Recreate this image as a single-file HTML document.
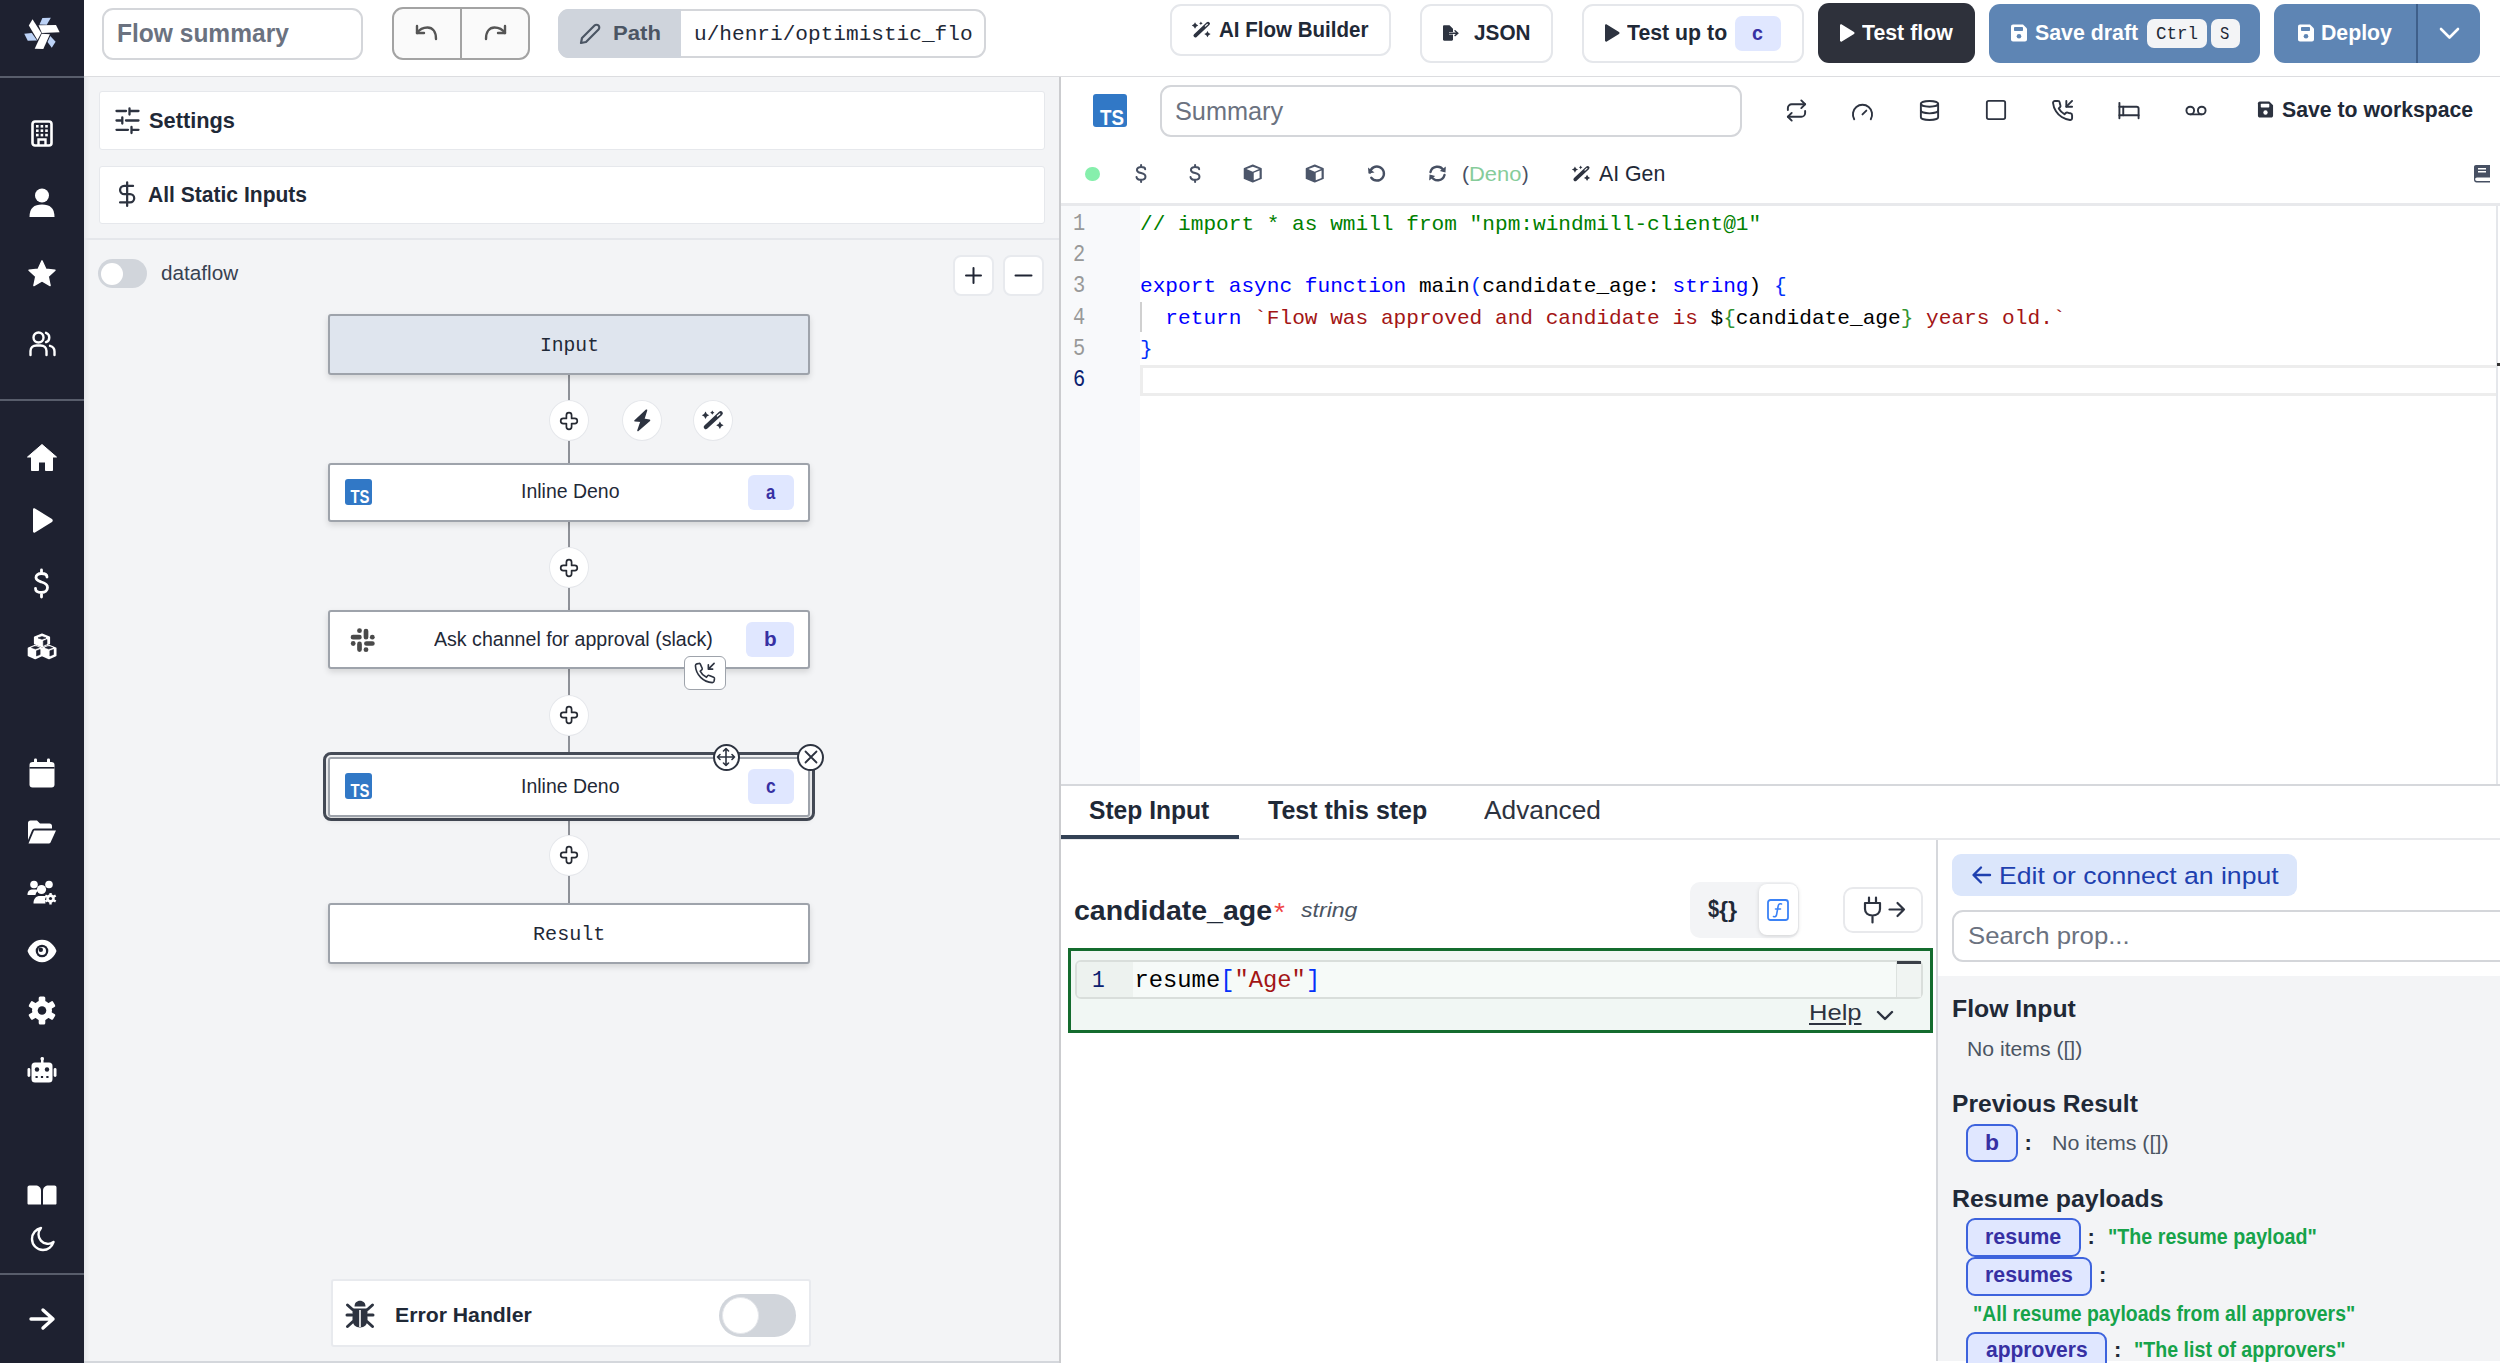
<!DOCTYPE html><html><head><meta charset="utf-8"><title>Flow editor</title><style>*{box-sizing:border-box;margin:0;padding:0}
html,body{width:2500px;height:1363px;overflow:hidden;background:#fff}
body{position:relative;font-family:"Liberation Sans",sans-serif}
.a{position:absolute}
.t{position:absolute;white-space:pre;line-height:1;transform-origin:0 0}
svg.a{overflow:visible}</style></head><body>
<div class="a" style="left:0px;top:0px;width:84px;height:1363px;background:#1e2130"></div>
<div class="a" style="left:0px;top:76px;width:84px;height:2px;background:#585d6b"></div>
<div class="a" style="left:0px;top:399px;width:84px;height:2px;background:#585d6b"></div>
<div class="a" style="left:0px;top:1273px;width:84px;height:2px;background:#585d6b"></div>
<svg class="a" style="left:16px;top:8px" width="52" height="50" viewBox="0 0 1418 1363" preserveAspectRatio="none">
<polygon points="640,450 720,270 950,265 840,455" fill="#bcd2f6"/>
<polygon points="615,472 1090,465 1190,660 705,680" fill="#fff"/>
<polygon points="700,705 925,715 745,1120 510,1110" fill="#fff"/>
<polygon points="935,760 1080,920 975,1085 860,930" fill="#bcd2f6"/>
<polygon points="350,480 450,310 690,680 585,870" fill="#fff"/>
<polygon points="225,700 430,680 575,885 320,890" fill="#bcd2f6"/>
</svg>
<svg class="a" style="left:31px;top:120px" width="22" height="27" viewBox="0 0 22 27" preserveAspectRatio="none"><rect x="1.5" y="1.5" width="19" height="24" rx="2.5" fill="none" stroke="#fff" stroke-width="2.6"/><rect x="5.0" y="5.0" width="2.6" height="2.6" fill="#fff"/><rect x="5.0" y="9.4" width="2.6" height="2.6" fill="#fff"/><rect x="5.0" y="13.8" width="2.6" height="2.6" fill="#fff"/><rect x="9.6" y="5.0" width="2.6" height="2.6" fill="#fff"/><rect x="9.6" y="9.4" width="2.6" height="2.6" fill="#fff"/><rect x="9.6" y="13.8" width="2.6" height="2.6" fill="#fff"/><rect x="14.2" y="5.0" width="2.6" height="2.6" fill="#fff"/><rect x="14.2" y="9.4" width="2.6" height="2.6" fill="#fff"/><rect x="14.2" y="13.8" width="2.6" height="2.6" fill="#fff"/><path d="M7.5,25 V19.5 H14.5 V25" fill="none" stroke="#fff" stroke-width="2.4"/></svg>
<svg class="a" style="left:29px;top:188px" width="26" height="30" viewBox="0 0 26 30" preserveAspectRatio="none"><circle cx="13" cy="7.5" r="7" fill="#fff"/><path d="M0.5,29 C0.5,20 5,16.5 13,16.5 C21,16.5 25.5,20 25.5,29 Z" fill="#fff"/></svg>
<svg class="a" style="left:28px;top:260px" width="28" height="27" viewBox="0 0 28 27" preserveAspectRatio="none"><path d="M14,0.8 L17.9,9.2 L27,10.2 L20.2,16.4 L22.1,25.6 L14,20.9 L5.9,25.6 L7.8,16.4 L1,10.2 L10.1,9.2 Z" fill="#fff" stroke="#fff" stroke-width="1.4" stroke-linejoin="round"/></svg>
<svg class="a" style="left:29px;top:331px" width="27" height="25" viewBox="0 0 27 25" preserveAspectRatio="none"><circle cx="9.5" cy="6.5" r="5" fill="none" stroke="#fff" stroke-width="2.4"/><path d="M1.5,24 V20 C1.5,16.5 4,14.5 7.5,14.5 H11.5 C15,14.5 17.5,16.5 17.5,20 V24" fill="none" stroke="#fff" stroke-width="2.4" stroke-linecap="round"/><path d="M17,1.8 A5,5 0 0 1 17,11.2" fill="none" stroke="#fff" stroke-width="2.4" stroke-linecap="round"/><path d="M21,14.8 C23.8,15.5 25.5,17.5 25.5,20.5 V24" fill="none" stroke="#fff" stroke-width="2.4" stroke-linecap="round"/></svg>
<svg class="a" style="left:27px;top:444px" width="30" height="27" viewBox="0 0 30 27" preserveAspectRatio="none"><path d="M15,0.5 L29.5,13 L25.5,13 V26.5 H18.5 V18 H11.5 V26.5 H4.5 V13 L0.5,13 Z" fill="#fff" stroke="#fff" stroke-width="1" stroke-linejoin="round"/></svg>
<svg class="a" style="left:31px;top:508px" width="22" height="25" viewBox="0 0 22 25" preserveAspectRatio="none"><path d="M2,1.5 C2,0.5 3,0 4,0.6 L21,11 C22,11.7 22,13.3 21,14 L4,24.4 C3,25 2,24.5 2,23.5 Z" fill="#fff"/></svg>
<svg class="a" style="left:33px;top:569px" width="17" height="29" viewBox="0 0 17 29" preserveAspectRatio="none"><path d="M14,8 C14,5.5 11.5,4.5 8.5,4.5 C5,4.5 3,6 3,8.5 C3,11.5 6,12.2 8.5,13 C11.5,13.8 14.5,15 14.5,18.5 C14.5,21.5 12,23.5 8.5,23.5 C5,23.5 2.5,22 2.5,19.5 M8.5,1 V4.5 M8.5,23.5 V28" fill="none" stroke="#fff" stroke-width="2.8" stroke-linecap="round"/></svg>
<svg class="a" style="left:24px;top:628px;" width="36" height="36" viewBox="24 628 36 36"><g fill="#fff" stroke="#fff" stroke-width="1.6" stroke-linejoin="round"><polygon points="42,634.3 49.3,637.3 49.3,643.5 42,646.5 34.7,643.5 34.7,637.3"/><polygon points="35.2,645.5 41.7,648.3 41.7,655.5 35.2,658.5 28.5,655.5 28.5,648.3"/><polygon points="49,645.5 55.7,648.3 55.7,655.5 49,658.5 42.3,655.5 42.3,648.3"/></g><g fill="#1e2130" stroke="#1e2130" stroke-width="0.6" stroke-linejoin="round"><polygon points="42,636.5 46,637.9 42,639.3 38,637.9"/><polygon points="43.3,641 47,639.5 47,644 43.3,645.5"/><polygon points="35.4,646.2 39.3,647.6 35.4,649 31.5,647.6"/><polygon points="36.5,650.8 40.1,649.5 40.1,654.5 36.5,656"/><polygon points="48.8,646.2 52.7,647.6 48.8,649 44.9,647.6"/><polygon points="49.9,650.8 53.5,649.5 53.5,654.5 49.9,656"/></g></svg>
<svg class="a" style="left:29px;top:758px" width="26" height="30" viewBox="0 0 26 30" preserveAspectRatio="none"><rect x="0.5" y="4" width="25" height="25.5" rx="3" fill="#fff"/><rect x="5" y="0.5" width="3" height="6" rx="1.2" fill="#fff"/><rect x="18" y="0.5" width="3" height="6" rx="1.2" fill="#fff"/><rect x="0.5" y="9" width="25" height="1.6" fill="#1e2130"/></svg>
<svg class="a" style="left:27px;top:820px" width="30" height="24" viewBox="0 0 30 24" preserveAspectRatio="none"><path d="M1,3 C1,1.5 2,0.5 3.5,0.5 H10 L13,3.5 H22.5 C24,3.5 25,4.5 25,6 V8.5 H8 C6.5,8.5 5.5,9.3 5,10.5 L1,20 Z" fill="#fff"/><path d="M7,10.5 H29 L23.5,22.5 C23,23.3 22.3,23.5 21.5,23.5 H1.5 Z" fill="#fff"/></svg>
<svg class="a" style="left:27px;top:880px" width="30" height="24" viewBox="0 0 30 24" preserveAspectRatio="none"><circle cx="7" cy="4.5" r="3.8" fill="#fff"/><circle cx="22" cy="4.5" r="3.8" fill="#fff"/><path d="M0.5,15 C0.5,11 2.5,9.5 6,9.5 H9 C10,9.5 10.8,9.8 11.5,10.2 C9.5,11.8 8.5,13.5 8.5,15 Z" fill="#fff"/><circle cx="14.5" cy="9.5" r="4.6" fill="#fff"/><path d="M6.5,23.5 C6.5,18.5 9,16 13,16 H17 C18,16 19,16.3 19.5,16.5 C18,17.8 17.5,20.5 18.5,23.5 Z" fill="#fff"/><g transform="translate(23.5,18.5)"><circle r="4.2" fill="#fff"/><g fill="#fff"><rect x="-1.2" y="-6" width="2.4" height="3" transform="rotate(0)"/><rect x="-1.2" y="-6" width="2.4" height="3" transform="rotate(60)"/><rect x="-1.2" y="-6" width="2.4" height="3" transform="rotate(120)"/><rect x="-1.2" y="-6" width="2.4" height="3" transform="rotate(180)"/><rect x="-1.2" y="-6" width="2.4" height="3" transform="rotate(240)"/><rect x="-1.2" y="-6" width="2.4" height="3" transform="rotate(300)"/></g><circle r="1.6" fill="#1e2130"/></g><path d="M19.5,13.5 C21,12.5 23,12 25,12.3" fill="none" stroke="#1e2130" stroke-width="1.4"/></svg>
<svg class="a" style="left:27px;top:939px" width="30" height="24" viewBox="0 0 30 24" preserveAspectRatio="none"><path d="M15,0.8 C23,0.8 28,7.5 29.5,12 C28,16.5 23,23.2 15,23.2 C7,23.2 2,16.5 0.5,12 C2,7.5 7,0.8 15,0.8 Z" fill="#fff"/><circle cx="15" cy="12" r="6.3" fill="#1e2130"/><circle cx="15" cy="12" r="4" fill="#fff"/><circle cx="13.8" cy="10.8" r="2.2" fill="#1e2130"/></svg>
<svg class="a" style="left:28px;top:996px" width="28" height="29" viewBox="0 0 28 29" preserveAspectRatio="none"><g transform="translate(14,14.5)"><circle r="10" fill="#fff"/><rect x="-3.3" y="-14" width="6.6" height="7" rx="1.5" fill="#fff" transform="rotate(0)"/><rect x="-3.3" y="-14" width="6.6" height="7" rx="1.5" fill="#fff" transform="rotate(60)"/><rect x="-3.3" y="-14" width="6.6" height="7" rx="1.5" fill="#fff" transform="rotate(120)"/><rect x="-3.3" y="-14" width="6.6" height="7" rx="1.5" fill="#fff" transform="rotate(180)"/><rect x="-3.3" y="-14" width="6.6" height="7" rx="1.5" fill="#fff" transform="rotate(240)"/><rect x="-3.3" y="-14" width="6.6" height="7" rx="1.5" fill="#fff" transform="rotate(300)"/><circle r="4.3" fill="#1e2130"/></g></svg>
<svg class="a" style="left:27px;top:1057px" width="30" height="26" viewBox="0 0 30 26" preserveAspectRatio="none"><rect x="14" y="0.5" width="2.5" height="6" fill="#fff"/><circle cx="15.2" cy="1.8" r="1.8" fill="#fff"/><rect x="4.5" y="5.5" width="21" height="20" rx="3.5" fill="#fff"/><rect x="0.5" y="11" width="2.8" height="9" rx="1.4" fill="#fff"/><rect x="26.7" y="11" width="2.8" height="9" rx="1.4" fill="#fff"/><circle cx="10" cy="12.5" r="2.2" fill="#1e2130"/><circle cx="20" cy="12.5" r="2.2" fill="#1e2130"/><rect x="8.5" y="19" width="2.2" height="2" fill="#1e2130"/><rect x="13.9" y="19" width="2.2" height="2" fill="#1e2130"/><rect x="19.3" y="19" width="2.2" height="2" fill="#1e2130"/></svg>
<svg class="a" style="left:27px;top:1185px" width="30" height="20" viewBox="0 0 30 20" preserveAspectRatio="none"><path d="M0.5,2.5 C0.5,1.3 1.3,0.5 2.5,0.5 H8.5 C11.5,0.5 14,2.5 14,5.5 V19.5 H1.5 C1,19.5 0.5,19 0.5,18.5 Z" fill="#fff"/><path d="M29.5,2.5 C29.5,1.3 28.7,0.5 27.5,0.5 H21.5 C18.5,0.5 16,2.5 16,5.5 V19.5 H28.5 C29,19.5 29.5,19 29.5,18.5 Z" fill="#fff"/></svg>
<svg class="a" style="left:30px;top:1226px" width="25" height="25" viewBox="0 0 25 25" preserveAspectRatio="none"><path d="M11,2 C6,3 2,7.5 2,13 C2,19 7,24 13,24 C18,24 22,20.5 23.5,16 C21.5,17.5 19,18 17,17.8 C12,17.3 8.5,13 8.5,8.5 C8.5,6 9.5,3.8 11,2 Z" fill="none" stroke="#fff" stroke-width="2.4" stroke-linejoin="round"/></svg>
<svg class="a" style="left:29px;top:1308px" width="27" height="22" viewBox="0 0 27 22" preserveAspectRatio="none"><path d="M2,11 H24 M14,2 L24,11 L14,20" fill="none" stroke="#fff" stroke-width="3.4" stroke-linecap="round" stroke-linejoin="round"/></svg>
<div class="a" style="left:84px;top:0px;width:2416px;height:76px;background:#fff"></div>
<div class="a" style="left:84px;top:76px;width:2416px;height:1.5px;background:#dcdde0"></div>
<div class="a" style="left:102px;top:8px;width:261px;height:52px;border:2px solid #d4d6da;border-radius:11px;background:#fff"></div>
<div class="a" style="left:392px;top:7px;width:138px;height:53px;border:2px solid #a3a3a3;border-radius:11px;background:#fafafa"></div>
<div class="a" style="left:460px;top:8px;width:2px;height:51px;background:#a3a3a3"></div>
<svg class="a" style="left:414px;top:24px;" width="24" height="18" viewBox="0 0 24 18"><path d="M3,2 V9 H10" fill="none" stroke="#555" stroke-width="2.4" stroke-linecap="round" stroke-linejoin="round"/><path d="M3,9 C6,4.5 10,3.5 13.5,3.5 C18.5,3.5 22,7.5 22,15" fill="none" stroke="#555" stroke-width="2.4" stroke-linecap="round"/></svg>
<svg class="a" style="left:484px;top:24px;" width="24" height="18" viewBox="0 0 24 18"><path d="M21,2 V9 H14" fill="none" stroke="#555" stroke-width="2.4" stroke-linecap="round" stroke-linejoin="round"/><path d="M21,9 C18,4.5 14,3.5 10.5,3.5 C5.5,3.5 2,7.5 2,15" fill="none" stroke="#555" stroke-width="2.4" stroke-linecap="round"/></svg>
<div class="a" style="left:558px;top:9px;width:428px;height:49px;border:2px solid #d4d6da;border-radius:11px;background:#fff"></div>
<div class="a" style="left:558px;top:9px;width:123px;height:49px;background:#cfd4dc;border-radius:11px 0 0 11px"></div>
<svg class="a" style="left:579px;top:23px;" width="22" height="22" viewBox="0 0 22 22"><path d="M15.5,2.5 C16.5,1.5 18.5,1.5 19.5,2.5 C20.5,3.5 20.5,5.5 19.5,6.5 L7,19 L2,20 L3,15 Z" fill="none" stroke="#4b5563" stroke-width="2.2" stroke-linejoin="round"/></svg>
<div class="a" style="left:1170px;top:4px;width:221px;height:52px;border:2px solid #e5e7eb;border-radius:11px;background:#fff"></div>
<svg class="a" style="left:1192px;top:21px;" width="19" height="17" viewBox="0 -0.5 22 19"><path d="M3.9,16 L18.6,2.3" stroke="#2d3340" stroke-width="4.4" stroke-linecap="round" fill="none"/><path d="M17.8,2.9 L15.4,5.1" stroke="#fff" stroke-width="1.3" stroke-linecap="round"/><path d="M3.5,0.5999999999999996 Q4.314,3.4859999999999998 7.2,4.3 Q4.314,5.114 3.5,8.0 Q2.686,5.114 -0.20000000000000018,4.3 Q2.686,3.4859999999999998 3.5,0.5999999999999996 Z" fill="#2d3340"/><path d="M10.3,-0.40000000000000013 Q10.762,1.238 12.4,1.7 Q10.762,2.162 10.3,3.8 Q9.838000000000001,2.162 8.200000000000001,1.7 Q9.838000000000001,1.238 10.3,-0.40000000000000013 Z" fill="#2d3340"/><path d="M17.9,10.600000000000001 Q18.714,13.486 21.599999999999998,14.3 Q18.714,15.114 17.9,18.0 Q17.086,15.114 14.2,14.3 Q17.086,13.486 17.9,10.600000000000001 Z" fill="#2d3340"/></svg>
<div class="a" style="left:1420px;top:4px;width:133px;height:59px;border:2px solid #e5e7eb;border-radius:11px;background:#fff"></div>
<svg class="a" style="left:1442px;top:25px;" width="17" height="16" viewBox="0 0 17 16"><path d="M1,1.5 C1,0.8 1.5,0.3 2.2,0.3 H7.5 L11,3.8 V7 H7 V9.5 H11 V14.5 C11,15.2 10.5,15.7 9.8,15.7 H2.2 C1.5,15.7 1,15.2 1,14.5 Z" fill="#2d3340"/><path d="M7.5,8.2 H15.5 M13,5.8 L15.8,8.2 L13,10.6" fill="none" stroke="#2d3340" stroke-width="1.4" stroke-linecap="round"/></svg>
<div class="a" style="left:1582px;top:4px;width:222px;height:59px;border:2px solid #e5e7eb;border-radius:11px;background:#fff"></div>
<svg class="a" style="left:1604px;top:24px;" width="16" height="18" viewBox="0 0 16 18"><path d="M1,1.5 C1,0.6 2,0 2.8,0.5 L15,8 C15.7,8.5 15.7,9.5 15,10 L2.8,17.5 C2,18 1,17.4 1,16.5 Z" fill="#2d3340"/></svg>
<div class="a" style="left:1735px;top:16px;width:46px;height:35px;background:#e0e7ff;border-radius:7px"></div>
<div class="a" style="left:1818px;top:3px;width:157px;height:60px;background:#2e313b;border-radius:11px"></div>
<svg class="a" style="left:1839px;top:24px;" width="16" height="18" viewBox="0 0 16 18"><path d="M1,1.5 C1,0.6 2,0 2.8,0.5 L15,8 C15.7,8.5 15.7,9.5 15,10 L2.8,17.5 C2,18 1,17.4 1,16.5 Z" fill="#fff"/></svg>
<div class="a" style="left:1989px;top:4px;width:271px;height:59px;background:#5e85b4;border-radius:11px"></div>
<svg class="a" style="left:2010px;top:24px;" width="18" height="18" viewBox="0 0 18 18"><path d="M1,2.5 C1,1.4 1.9,0.5 3,0.5 H13 L17,4.5 V15.5 C17,16.6 16.1,17.5 15,17.5 H3 C1.9,17.5 1,16.6 1,15.5 Z" fill="#fff"/><rect x="4" y="3" width="9" height="4" rx="0.8" fill="#5e85b4"/><circle cx="9" cy="12.2" r="2.3" fill="#5e85b4"/></svg>
<div class="a" style="left:2147px;top:19px;width:60px;height:29px;background:#f3f4f6;border-radius:7px"></div>
<div class="a" style="left:2211px;top:19px;width:29px;height:29px;background:#f3f4f6;border-radius:7px"></div>
<div class="a" style="left:2274px;top:4px;width:206px;height:59px;background:#5e85b4;border-radius:11px"></div>
<div class="a" style="left:2416px;top:4px;width:2px;height:59px;background:#3f5f8a"></div>
<svg class="a" style="left:2297px;top:24px;" width="18" height="18" viewBox="0 0 18 18"><path d="M1,2.5 C1,1.4 1.9,0.5 3,0.5 H13 L17,4.5 V15.5 C17,16.6 16.1,17.5 15,17.5 H3 C1.9,17.5 1,16.6 1,15.5 Z" fill="#fff"/><rect x="4" y="3" width="9" height="4" rx="0.8" fill="#5e85b4"/><circle cx="9" cy="12.2" r="2.3" fill="#5e85b4"/></svg>
<svg class="a" style="left:2439px;top:27px;" width="21" height="13" viewBox="0 0 21 13"><path d="M2,2 L10.5,10.5 L19,2" fill="none" stroke="#fff" stroke-width="2.6" stroke-linecap="round" stroke-linejoin="round"/></svg>
<div class="a" style="left:84px;top:77px;width:975px;height:1286px;background:#f3f4f6"></div>
<div class="a" style="left:84px;top:77px;width:6px;height:1286px;background:linear-gradient(90deg,#e6e8eb,#f3f4f6)"></div>
<div class="a" style="left:1059px;top:77px;width:2px;height:1286px;background:#cbcccf"></div>
<div class="a" style="left:98.5px;top:91px;width:946.5px;height:59px;background:#fff;border:1.5px solid #e6e8ec;border-radius:3px"></div>
<svg class="a" style="left:108px;top:100px;" width="40" height="40" viewBox="0 0 40 40"><g stroke="#2d3340" stroke-width="2.3" stroke-linecap="round" fill="none"><path d="M8.5,11 H18 M21.5,11 H30.5 M21.5,8.5 V14.5 M8.5,20.5 H14.3 M18,20.5 H30.5 M14.3,17.3 V23.6 M8.5,29.8 H20 M23.5,29.8 H30.5 M23.5,27 V33"/></g></svg>
<div class="a" style="left:98.5px;top:165.5px;width:946.5px;height:58.5px;background:#fff;border:1.5px solid #e6e8ec;border-radius:3px"></div>
<svg class="a" style="left:113.2px;top:180.3px;" width="28.3" height="28.3" viewBox="0 0 24 24"><path d="M12 2v20 M17 5H9.5a3.5 3.5 0 0 0 0 7h5a3.5 3.5 0 0 1 0 7H6" fill="none" stroke="#2d3340" stroke-width="1.9" stroke-linecap="round" stroke-linejoin="round"/></svg>
<div class="a" style="left:84px;top:238px;width:975px;height:2px;background:#e5e7eb"></div>
<div class="a" style="left:98px;top:259px;width:49px;height:29px;background:#d1d5db;border-radius:15px"></div>
<div class="a" style="left:101px;top:263px;width:22px;height:22px;background:#fff;border-radius:50%"></div>
<div class="a" style="left:953px;top:255px;width:41px;height:41px;background:#fff;border:2px solid #e8eaee;border-radius:8px"></div>
<div class="a" style="left:1003px;top:255px;width:41px;height:41px;background:#fff;border:2px solid #e8eaee;border-radius:8px"></div>
<svg class="a" style="left:965px;top:267px;" width="17" height="17" viewBox="0 0 17 17"><path d="M8.5,1 V16 M1,8.5 H16" stroke="#1f2433" stroke-width="2" stroke-linecap="round"/></svg>
<svg class="a" style="left:1014px;top:267px;" width="19" height="17" viewBox="0 0 19 17"><path d="M1.5,8.5 H17.5" stroke="#1f2433" stroke-width="2" stroke-linecap="round"/></svg>
<div class="a" style="left:568px;top:375px;width:2px;height:26px;background:#8e9198"></div>
<div class="a" style="left:568px;top:440px;width:2px;height:24px;background:#8e9198"></div>
<div class="a" style="left:568px;top:521px;width:2px;height:27px;background:#8e9198"></div>
<div class="a" style="left:568px;top:587px;width:2px;height:24px;background:#8e9198"></div>
<div class="a" style="left:568px;top:668px;width:2px;height:27px;background:#8e9198"></div>
<div class="a" style="left:568px;top:735px;width:2px;height:17px;background:#8e9198"></div>
<div class="a" style="left:568px;top:820px;width:2px;height:15px;background:#8e9198"></div>
<div class="a" style="left:568px;top:874px;width:2px;height:31px;background:#8e9198"></div>
<div class="a" style="left:328px;top:314px;width:482px;height:61px;background:#dfe5ee;border:2px solid #9ea3ab;border-radius:3px;box-shadow:0 3px 6px rgba(0,0,0,0.13)"></div>
<div class="a" style="left:549px;top:400.0px;width:40px;height:41px;background:#fff;border:1.5px solid #e5e7eb;border-radius:50%"></div>
<svg class="a" style="left:559.0px;top:410.5px;" width="20" height="20" viewBox="0 0 20 20"><path d="M7.4,4.3 A2.6,2.6 0 0 1 12.6,4.3 V7.4 H15.7 A2.6,2.6 0 0 1 15.7,12.6 H12.6 V15.7 A2.6,2.6 0 0 1 7.4,15.7 V12.6 H4.3 A2.6,2.6 0 0 1 4.3,7.4 H7.4 Z" fill="none" stroke="#262a33" stroke-width="1.7" stroke-linejoin="round"/></svg>
<div class="a" style="left:622px;top:400.0px;width:40px;height:41px;background:#fff;border:1.5px solid #e5e7eb;border-radius:50%"></div>
<svg class="a" style="left:633.75px;top:409.15px;" width="16.5" height="22.7" viewBox="0 0 16.5 22.7"><path d="M12.5,1.2 L1,11.8 L7.2,12.3 L4,21.5 L15.5,11.3 L9.6,10.4 Z" fill="#2d3340" stroke="#2d3340" stroke-width="1.6" stroke-linejoin="round"/></svg>
<div class="a" style="left:693.4px;top:400.0px;width:40px;height:41px;background:#fff;border:1.5px solid #e5e7eb;border-radius:50%"></div>
<svg class="a" style="left:702.4px;top:411.0px;" width="22" height="19" viewBox="0 0 22 19"><path d="M3.9,16 L18.6,2.3" stroke="#2d3340" stroke-width="4.4" stroke-linecap="round" fill="none"/><path d="M17.8,2.9 L15.4,5.1" stroke="#fff" stroke-width="1.3" stroke-linecap="round"/><path d="M3.5,0.5999999999999996 Q4.314,3.4859999999999998 7.2,4.3 Q4.314,5.114 3.5,8.0 Q2.686,5.114 -0.20000000000000018,4.3 Q2.686,3.4859999999999998 3.5,0.5999999999999996 Z" fill="#2d3340"/><path d="M10.3,-0.40000000000000013 Q10.762,1.238 12.4,1.7 Q10.762,2.162 10.3,3.8 Q9.838000000000001,2.162 8.200000000000001,1.7 Q9.838000000000001,1.238 10.3,-0.40000000000000013 Z" fill="#2d3340"/><path d="M17.9,10.600000000000001 Q18.714,13.486 21.599999999999998,14.3 Q18.714,15.114 17.9,18.0 Q17.086,15.114 14.2,14.3 Q17.086,13.486 17.9,10.600000000000001 Z" fill="#2d3340"/></svg>
<div class="a" style="left:328px;top:463px;width:482px;height:59px;background:#fff;border:2px solid #9ea3ab;border-radius:3px;box-shadow:0 3px 6px rgba(0,0,0,0.13)"></div>
<svg class="a" style="left:345px;top:479px;" width="27" height="26" viewBox="0 0 27 26"><rect x="0" y="0" width="27" height="26" rx="3" fill="#3178c6"/><text x="5.5" y="24" font-family="Liberation Sans" font-weight="700" font-size="18" textLength="19" lengthAdjust="spacingAndGlyphs" fill="#fff">TS</text></svg>
<div class="a" style="left:748px;top:475px;width:46px;height:35px;background:#e0e7ff;border-radius:6px"></div>
<div class="a" style="left:549px;top:547.0px;width:40px;height:41px;background:#fff;border:1.5px solid #e5e7eb;border-radius:50%"></div>
<svg class="a" style="left:559.0px;top:557.5px;" width="20" height="20" viewBox="0 0 20 20"><path d="M7.4,4.3 A2.6,2.6 0 0 1 12.6,4.3 V7.4 H15.7 A2.6,2.6 0 0 1 15.7,12.6 H12.6 V15.7 A2.6,2.6 0 0 1 7.4,15.7 V12.6 H4.3 A2.6,2.6 0 0 1 4.3,7.4 H7.4 Z" fill="none" stroke="#262a33" stroke-width="1.7" stroke-linejoin="round"/></svg>
<div class="a" style="left:328px;top:610px;width:482px;height:59px;background:#fff;border:2px solid #9ea3ab;border-radius:3px;box-shadow:0 3px 6px rgba(0,0,0,0.13)"></div>
<svg class="a" style="left:346px;top:624px;" width="32" height="32" viewBox="346 624 32 32"><g stroke="#4a4a4a" stroke-width="4.7" stroke-linecap="round" fill="none"><path d="M366,631 V637.2 M353,637.2 H359.4 M366.4,643.5 H372.4 M359.5,643.9 V649.6"/></g><g fill="#4a4a4a"><circle cx="359.5" cy="630.7" r="2.4"/><circle cx="372.3" cy="637.2" r="2.4"/><circle cx="353.2" cy="643.5" r="2.4"/><circle cx="366" cy="649.7" r="2.4"/></g></svg>
<div class="a" style="left:746px;top:622px;width:48px;height:35px;background:#e0e7ff;border-radius:6px"></div>
<div class="a" style="left:684px;top:656px;width:42px;height:34px;background:#fff;border:1.5px solid #9ea3ab;border-radius:6px"></div>
<svg class="a" style="left:694px;top:661px;" width="22" height="24" viewBox="0 0 23 24"><path d="M6.5,2.5 L8.5,7 C8.8,7.6 8.6,8.3 8.1,8.7 L6.5,10 C7.8,12.8 10.2,15.2 13,16.5 L14.3,14.9 C14.7,14.4 15.4,14.2 16,14.5 L20.5,16.5 C21.2,16.8 21.5,17.5 21.4,18.2 L21,20.5 C20.8,21.4 20,22 19.1,22 C9.7,21.5 2,13.8 1.5,4.4 C1.5,3.5 2.1,2.7 3,2.5 L5.2,2 C5.8,1.9 6.2,2.1 6.5,2.5 Z" fill="none" stroke="#2d3340" stroke-width="1.7" stroke-linejoin="round"/><path d="M21,2 L15,8 M15,3.5 V8 H19.5" fill="none" stroke="#2d3340" stroke-width="1.7" stroke-linecap="round" stroke-linejoin="round"/></svg>
<div class="a" style="left:549px;top:694.5px;width:40px;height:41px;background:#fff;border:1.5px solid #e5e7eb;border-radius:50%"></div>
<svg class="a" style="left:559.0px;top:705.0px;" width="20" height="20" viewBox="0 0 20 20"><path d="M7.4,4.3 A2.6,2.6 0 0 1 12.6,4.3 V7.4 H15.7 A2.6,2.6 0 0 1 15.7,12.6 H12.6 V15.7 A2.6,2.6 0 0 1 7.4,15.7 V12.6 H4.3 A2.6,2.6 0 0 1 4.3,7.4 H7.4 Z" fill="none" stroke="#262a33" stroke-width="1.7" stroke-linejoin="round"/></svg>
<div class="a" style="left:323px;top:752px;width:492px;height:69px;border:3.5px solid #454b57;border-radius:8px"></div>
<div class="a" style="left:328px;top:756.5px;width:482px;height:60px;background:#fff;border:2px solid #9ea3ab;border-radius:3px;box-shadow:0 3px 6px rgba(0,0,0,0.13)"></div>
<svg class="a" style="left:345px;top:773px;" width="27" height="26" viewBox="0 0 27 26"><rect x="0" y="0" width="27" height="26" rx="3" fill="#3178c6"/><text x="5.5" y="24" font-family="Liberation Sans" font-weight="700" font-size="18" textLength="19" lengthAdjust="spacingAndGlyphs" fill="#fff">TS</text></svg>
<div class="a" style="left:748px;top:769px;width:46px;height:35px;background:#e0e7ff;border-radius:6px"></div>
<div class="a" style="left:712.5px;top:743.5px;width:27px;height:27px;background:#fff;border:2.5px solid #2d3340;border-radius:50%"></div>
<svg class="a" style="left:716px;top:747px;" width="20" height="20" viewBox="0 0 20 20"><path d="M10,1.5 V18.5 M1.5,10 H18.5 M7.5,4 L10,1.5 L12.5,4 M7.5,16 L10,18.5 L12.5,16 M4,7.5 L1.5,10 L4,12.5 M16,7.5 L18.5,10 L16,12.5" fill="none" stroke="#2d3340" stroke-width="1.6" stroke-linecap="round" stroke-linejoin="round"/></svg>
<div class="a" style="left:797px;top:743.5px;width:27px;height:27px;background:#fff;border:2.5px solid #2d3340;border-radius:50%"></div>
<svg class="a" style="left:803.5px;top:750px;" width="14" height="14" viewBox="0 0 14 14"><path d="M1.5,1.5 L12.5,12.5 M12.5,1.5 L1.5,12.5" stroke="#2d3340" stroke-width="1.8" stroke-linecap="round"/></svg>
<div class="a" style="left:549px;top:834.5px;width:40px;height:41px;background:#fff;border:1.5px solid #e5e7eb;border-radius:50%"></div>
<svg class="a" style="left:559.0px;top:845.0px;" width="20" height="20" viewBox="0 0 20 20"><path d="M7.4,4.3 A2.6,2.6 0 0 1 12.6,4.3 V7.4 H15.7 A2.6,2.6 0 0 1 15.7,12.6 H12.6 V15.7 A2.6,2.6 0 0 1 7.4,15.7 V12.6 H4.3 A2.6,2.6 0 0 1 4.3,7.4 H7.4 Z" fill="none" stroke="#262a33" stroke-width="1.7" stroke-linejoin="round"/></svg>
<div class="a" style="left:328px;top:903px;width:482px;height:61px;background:#fff;border:2px solid #9ea3ab;border-radius:3px;box-shadow:0 3px 6px rgba(0,0,0,0.13)"></div>
<div class="a" style="left:331px;top:1279px;width:480px;height:68px;background:#fff;border:2px solid #e8eaee;border-radius:3px"></div>
<svg class="a" style="left:345px;top:1300px;" width="30" height="29" viewBox="0 0 30 29"><g fill="#2d3340"><path d="M9.5,6.5 C9.5,3 11.8,0.8 15,0.8 C18.2,0.8 20.5,3 20.5,6.5 Z"/><path d="M7.5,8.5 H22.5 V20 C22.5,24.5 19.5,27.5 15,27.5 C10.5,27.5 7.5,24.5 7.5,20 Z"/></g><path d="M15,10 V27" stroke="#fff" stroke-width="1.6"/><g stroke="#2d3340" stroke-width="3" stroke-linecap="round"><path d="M2,15 H7 M23,15 H28 M2.5,5 L7.5,9.5 M27.5,5 L22.5,9.5 M2.5,26.5 L8,21.5 M27.5,26.5 L22,21.5"/></g></svg>
<div class="a" style="left:719px;top:1294px;width:77px;height:43px;background:#d1d5db;border-radius:22px"></div>
<div class="a" style="left:722px;top:1297px;width:37px;height:37px;background:#fff;border-radius:50%;border:1px solid #e5e7eb"></div>
<div class="a" style="left:84px;top:1361px;width:975px;height:2px;background:#d4d7dc"></div>
<div class="a" style="left:1061px;top:77px;width:1439px;height:1286px;background:#fff"></div>
<svg class="a" style="left:1093px;top:94px;" width="34" height="33" viewBox="0 0 34 33"><rect x="0" y="0" width="34" height="33" rx="3" fill="#3178c6"/><text x="7" y="31" font-family="Liberation Sans" font-weight="700" font-size="22.5" textLength="24" lengthAdjust="spacingAndGlyphs" fill="#fff">TS</text></svg>
<div class="a" style="left:1160px;top:85px;width:582px;height:52px;border:2px solid #d4d6da;border-radius:11px;background:#fff"></div>
<svg class="a" style="left:1785px;top:99px;" width="23" height="23" viewBox="0 0 24 24"><g fill="none" stroke="#2d3340" stroke-width="2" stroke-linecap="round" stroke-linejoin="round"><path d="M17 1.5l4 4-4 4"/><path d="M3 11.5v-2a4 4 0 0 1 4-4h14"/><path d="M7 22.5l-4-4 4-4"/><path d="M21 12.5v2a4 4 0 0 1-4 4H3"/></g></svg>
<svg class="a" style="left:1851px;top:101px;" width="23" height="23" viewBox="0 0 24 24"><g fill="none" stroke="#2d3340" stroke-width="2" stroke-linecap="round" stroke-linejoin="round"><path d="M12 14l4-4"/><path d="M3.34 19a10 10 0 1 1 17.32 0"/></g></svg>
<svg class="a" style="left:1918px;top:99px;" width="23" height="23" viewBox="0 0 24 24"><g fill="none" stroke="#2d3340" stroke-width="2" stroke-linecap="round" stroke-linejoin="round"><ellipse cx="12" cy="5" rx="9" ry="3"/><path d="M3 5V19A9 3 0 0 0 21 19V5"/><path d="M3 12A9 3 0 0 0 21 12"/></g></svg>
<svg class="a" style="left:1985px;top:99px;" width="22" height="22" viewBox="0 0 24 24"><g fill="none" stroke="#2d3340" stroke-width="2" stroke-linecap="round" stroke-linejoin="round"><rect x="2" y="2" width="20" height="20" rx="2"/></g></svg>
<svg class="a" style="left:2051px;top:99px;" width="23" height="23" viewBox="0 0 24 24"><g fill="none" stroke="#2d3340" stroke-width="2" stroke-linecap="round" stroke-linejoin="round"><polyline points="16 2 16 8 22 8"/><line x1="22" y1="2" x2="16" y2="8"/><path d="M22 16.92v3a2 2 0 0 1-2.18 2 19.79 19.79 0 0 1-8.63-3.07 19.5 19.5 0 0 1-6-6 19.79 19.79 0 0 1-3.07-8.67A2 2 0 0 1 4.11 2h3a2 2 0 0 1 2 1.72 12.84 12.84 0 0 0 .7 2.81 2 2 0 0 1-.45 2.11L8.09 9.91a16 16 0 0 0 6 6l1.27-1.27a2 2 0 0 1 2.11-.45 12.84 12.84 0 0 0 2.81.7A2 2 0 0 1 22 16.92z"/></g></svg>
<svg class="a" style="left:2117px;top:99px;" width="24" height="23" viewBox="0 0 24 24"><g fill="none" stroke="#2d3340" stroke-width="2" stroke-linecap="round" stroke-linejoin="round"><path d="M2 4v16"/><path d="M2 8h18a2 2 0 0 1 2 2v10"/><path d="M2 17h20"/><path d="M6 8v9"/></g></svg>
<svg class="a" style="left:2184px;top:99px;" width="24" height="23" viewBox="0 0 24 24"><g fill="none" stroke="#2d3340" stroke-width="2" stroke-linecap="round" stroke-linejoin="round"><circle cx="6" cy="12" r="4"/><circle cx="18" cy="12" r="4"/><line x1="6" y1="16" x2="18" y2="16"/></g></svg>
<svg class="a" style="left:2257px;top:101px;" width="17" height="17" viewBox="0 0 18 18"><path d="M1,2.5 C1,1.4 1.9,0.5 3,0.5 H13 L17,4.5 V15.5 C17,16.6 16.1,17.5 15,17.5 H3 C1.9,17.5 1,16.6 1,15.5 Z" fill="#2d3340"/><rect x="4" y="3" width="9" height="4" rx="0.8" fill="#fff"/><circle cx="9" cy="12.2" r="2.3" fill="#fff"/></svg>
<div class="a" style="left:1085px;top:166.5px;width:14.5px;height:14.5px;background:#86efac;border-radius:50%"></div>
<svg class="a" style="left:1134.5px;top:164px;" width="12" height="19" viewBox="0 0 12.4 19"><path d="M10.5,5 C10.5,3.5 8.8,2.8 6.3,2.8 C3.6,2.8 2,4 2,5.8 C2,7.8 4.2,8.5 6.3,9 C8.7,9.6 10.8,10.5 10.8,12.8 C10.8,14.8 9,16 6.3,16 C3.6,16 1.8,15 1.6,13.2 M6.3,0.8 V2.8 M6.3,16 V18.2" fill="none" stroke="#475063" stroke-width="2.1" stroke-linecap="round"/></svg>
<svg class="a" style="left:1188.5px;top:164px;" width="12" height="19" viewBox="0 0 12.4 19"><path d="M10.5,5 C10.5,3.5 8.8,2.8 6.3,2.8 C3.6,2.8 2,4 2,5.8 C2,7.8 4.2,8.5 6.3,9 C8.7,9.6 10.8,10.5 10.8,12.8 C10.8,14.8 9,16 6.3,16 C3.6,16 1.8,15 1.6,13.2 M6.3,0.8 V2.8 M6.3,16 V18.2" fill="none" stroke="#475063" stroke-width="2.1" stroke-linecap="round"/></svg>
<svg class="a" style="left:1243px;top:164px;" width="19.5" height="19" viewBox="0 0 20 19"><path d="M10,1 L18.5,4.5 V14.5 L10,18 L1.5,14.5 V4.5 Z" fill="#4c566a" stroke="#4c566a" stroke-width="1.5" stroke-linejoin="round"/><path d="M3.5,5 L10,2.6 L16.5,5 L10,7.6 Z" fill="#fff"/><path d="M11,8.8 L17,6.5 V14 L11,16.3 Z" fill="#fff"/></svg>
<svg class="a" style="left:1304.5px;top:164px;" width="19.5" height="19" viewBox="0 0 20 19"><path d="M10,1 L18.5,4.5 V14.5 L10,18 L1.5,14.5 V4.5 Z" fill="#4c566a" stroke="#4c566a" stroke-width="1.5" stroke-linejoin="round"/><path d="M3.5,5 L10,2.6 L16.5,5 L10,7.6 Z" fill="#fff"/><path d="M11,8.8 L17,6.5 V14 L11,16.3 Z" fill="#fff"/></svg>
<svg class="a" style="left:1366.5px;top:165px;" width="18.5" height="17" viewBox="0 0 18.5 17"><path d="M3,7.5 A7,7 0 1 1 4.3,12.7" fill="none" stroke="#475063" stroke-width="2.4" stroke-linecap="round"/><path d="M1,2.5 L1.5,8.5 L7.5,7.5 Z" fill="#475063"/></svg>
<svg class="a" style="left:1427.5px;top:165px;" width="19" height="17" viewBox="0 0 19 17"><path d="M2.5,7 A7,7 0 0 1 15.5,5.5" fill="none" stroke="#475063" stroke-width="2.4" stroke-linecap="round"/><path d="M16.5,10 A7,7 0 0 1 3.5,11.5" fill="none" stroke="#475063" stroke-width="2.4" stroke-linecap="round"/><path d="M17.8,1.5 L17.5,7.5 L11.8,6 Z" fill="#475063"/><path d="M1.2,15.5 L1.5,9.5 L7.2,11 Z" fill="#475063"/></svg>
<svg class="a" style="left:1571.5px;top:165px;" width="18.5" height="17" viewBox="0 -0.5 22 19"><path d="M3.9,16 L18.6,2.3" stroke="#2d3340" stroke-width="4.4" stroke-linecap="round" fill="none"/><path d="M17.8,2.9 L15.4,5.1" stroke="#fff" stroke-width="1.3" stroke-linecap="round"/><path d="M3.5,0.5999999999999996 Q4.314,3.4859999999999998 7.2,4.3 Q4.314,5.114 3.5,8.0 Q2.686,5.114 -0.20000000000000018,4.3 Q2.686,3.4859999999999998 3.5,0.5999999999999996 Z" fill="#2d3340"/><path d="M10.3,-0.40000000000000013 Q10.762,1.238 12.4,1.7 Q10.762,2.162 10.3,3.8 Q9.838000000000001,2.162 8.200000000000001,1.7 Q9.838000000000001,1.238 10.3,-0.40000000000000013 Z" fill="#2d3340"/><path d="M17.9,10.600000000000001 Q18.714,13.486 21.599999999999998,14.3 Q18.714,15.114 17.9,18.0 Q17.086,15.114 14.2,14.3 Q17.086,13.486 17.9,10.600000000000001 Z" fill="#2d3340"/></svg>
<svg class="a" style="left:2473px;top:164px;" width="18" height="19" viewBox="0 0 18 19"><path d="M1,3 C1,1.8 1.8,1 3,1 H17 V13.5 H4 C2.8,13.5 2.2,14.3 2.2,15.3 C2.2,16.3 2.8,17 4,17 H17 V18.5 H3.5 C2,18.5 1,17.3 1,15.8 Z" fill="#475063"/><path d="M5,4.8 H13 M5,7.8 H13" stroke="#fff" stroke-width="1.4"/></svg>
<div class="a" style="left:1061px;top:203px;width:1439px;height:3px;background:#e8e9ec"></div>
<div class="a" style="left:1061px;top:206px;width:79px;height:579px;background:#f8f9fb"></div>
<div class="a" style="left:2496px;top:206px;width:2px;height:579px;background:#e5e7eb"></div>
<div class="a" style="left:1140px;top:365px;width:1356px;height:31px;border:3px solid #ededed;border-right:none"></div>
<div class="a" style="left:1140px;top:302px;width:1.5px;height:30px;background:#d0d0d0"></div>
<div class="a" style="left:2497px;top:362.5px;width:3px;height:3.5px;background:#333"></div>
<div class="t" style="left:1140px;top:214.00px;font-family:'Liberation Mono', monospace;font-size:21.13px"><span style="color:#008000">// import * as wmill from "npm:windmill-client@1"</span></div>
<div class="t" style="left:1140px;top:276.00px;font-family:'Liberation Mono', monospace;font-size:21.13px"><span style="color:#0000ff">export</span><span style="color:#000000"> </span><span style="color:#0000ff">async</span><span style="color:#000000"> </span><span style="color:#0000ff">function</span><span style="color:#000000"> main</span><span style="color:#0431fa">(</span><span style="color:#000000">candidate_age: </span><span style="color:#0000ff">string</span><span style="color:#000000">)</span><span style="color:#000000"> </span><span style="color:#0431fa">{</span></div>
<div class="t" style="left:1140px;top:308.00px;font-family:'Liberation Mono', monospace;font-size:21.13px"><span style="color:#000000">  </span><span style="color:#0000ff">return</span><span style="color:#000000"> </span><span style="color:#a31515">`Flow was approved and candidate is </span><span style="color:#000000">$</span><span style="color:#319331">{</span><span style="color:#000000">candidate_age</span><span style="color:#319331">}</span><span style="color:#a31515"> years old.`</span></div>
<div class="t" style="left:1140px;top:339.00px;font-family:'Liberation Mono', monospace;font-size:21.13px"><span style="color:#0431fa">}</span></div>
<div class="a" style="left:1061px;top:784px;width:1439px;height:2px;background:#d6d8dc"></div>
<div class="a" style="left:1061px;top:838px;width:1439px;height:2px;background:#e8e9ec"></div>
<div class="a" style="left:1061px;top:835px;width:178px;height:4px;background:#334155"></div>
<div class="a" style="left:1936px;top:840px;width:2px;height:523px;background:#d6d8dc"></div>
<div class="a" style="left:1690px;top:882px;width:109px;height:56px;background:#f3f4f6;border-radius:10px"></div>
<div class="a" style="left:1759px;top:884px;width:39px;height:51px;background:#fff;border-radius:8px;box-shadow:0 1px 4px rgba(0,0,0,0.15)"></div>
<svg class="a" style="left:1767px;top:899px;" width="22" height="22" viewBox="0 0 22 22"><rect x="1" y="1" width="20" height="20" rx="2.5" fill="none" stroke="#3b82f6" stroke-width="1.8"/><path d="M14.5,5 C13,4.5 11.5,5 11.2,6.8 L9.5,16 C9.2,17.5 8,18 6.5,17.5 M8.5,10 H13.5" fill="none" stroke="#3b82f6" stroke-width="1.6" stroke-linecap="round"/></svg>
<div class="a" style="left:1843px;top:887px;width:80px;height:46px;background:#fff;border:2px solid #e8e9ec;border-radius:10px"></div>
<svg class="a" style="left:1863px;top:896px;" width="19" height="28" viewBox="0 0 19 28"><path d="M6,1.5 V7 M13,1.5 V7 M2,7 H17 V13 C17,17 14,19.5 9.5,19.5 C5,19.5 2,17 2,13 Z M9.5,19.5 V26.5" fill="none" stroke="#2d3340" stroke-width="2.2" stroke-linecap="round" stroke-linejoin="round"/></svg>
<svg class="a" style="left:1888px;top:901px;" width="18" height="17" viewBox="0 0 18 17"><path d="M1.5,8.5 H16 M9.5,2 L16,8.5 L9.5,15" fill="none" stroke="#2d3340" stroke-width="2.2" stroke-linecap="round" stroke-linejoin="round"/></svg>
<div class="a" style="left:1068px;top:948px;width:865px;height:85px;border:3px solid #146c2e;background:#f1f7f4"></div>
<div class="a" style="left:1075px;top:960px;width:848px;height:39px;border:2px solid #d9dedb;border-radius:6px;background:#f6faf8"></div>
<div class="a" style="left:1077px;top:962px;width:56px;height:35px;background:#edf2ef;border-radius:4px 0 0 4px"></div>
<div class="a" style="left:1896px;top:962px;width:25px;height:35px;background:#f0f4f2;border-left:1.5px solid #dde2df"></div>
<div class="a" style="left:1897px;top:961px;width:24px;height:3px;background:#3a3f47"></div>
<div class="t" style="left:1134.5px;top:969.00px;font-family:'Liberation Mono', monospace;font-size:23.8px"><span style="color:#000">resume</span><span style="color:#0431fa">[</span><span style="color:#a31515">"Age"</span><span style="color:#0431fa">]</span></div>
<svg class="a" style="left:1876px;top:1010px;" width="18" height="12" viewBox="0 0 18 12"><path d="M2,2 L9,9 L16,2" fill="none" stroke="#2d3340" stroke-width="2.4" stroke-linecap="round" stroke-linejoin="round"/></svg>
<div class="a" style="left:1938px;top:976px;width:562px;height:387px;background:#f3f4f6"></div>
<div class="a" style="left:1061px;top:1361px;width:1439px;height:2px;background:#fff"></div>
<div class="a" style="left:1952px;top:854px;width:345px;height:42px;background:#dbe6fb;border-radius:9px"></div>
<svg class="a" style="left:1971px;top:865px;" width="21" height="20" viewBox="0 0 21 20"><path d="M19,10 H3 M10,2.5 L2.5,10 L10,17.5" fill="none" stroke="#1e40af" stroke-width="2.4" stroke-linecap="round" stroke-linejoin="round"/></svg>
<div class="a" style="left:1952px;top:910px;width:600px;height:52px;border:2px solid #d4d6da;border-radius:11px;background:#fff"></div>
<div class="a" style="left:1966px;top:1124px;width:52px;height:38px;background:#e0e7ff;border:2px solid #3d63dd;border-radius:9px"></div>
<div class="a" style="left:1966px;top:1218px;width:115px;height:39px;background:#e0e7ff;border:2px solid #3d63dd;border-radius:9px"></div>
<div class="a" style="left:1966px;top:1257px;width:126px;height:39px;background:#e0e7ff;border:2px solid #3d63dd;border-radius:9px"></div>
<div class="a" style="left:1966px;top:1332px;width:141px;height:40px;background:#e0e7ff;border:2px solid #3d63dd;border-radius:9px"></div>
<span class="t" style="left:117.02px;top:21.00px;font-family:'Liberation Sans', sans-serif;font-size:25px;font-weight:700;color:#6b7280;transform:scaleX(0.9819);">Flow summary</span>
<span class="t" style="left:612.95px;top:22.00px;font-family:'Liberation Sans', sans-serif;font-size:21px;font-weight:700;color:#4b5563;transform:scaleX(1.0531);">Path</span>
<span class="t" style="left:694.00px;top:24.00px;font-family:'Liberation Mono', monospace;font-size:21px;font-weight:400;color:#1f2937;transform:scaleX(1.0049);">u/henri/optimistic_flo</span>
<span class="t" style="left:1219.00px;top:20.00px;font-family:'Liberation Sans', sans-serif;font-size:21.5px;font-weight:700;color:#1f2937;transform:scaleX(0.9548);">AI Flow Builder</span>
<span class="t" style="left:1474.00px;top:23.00px;font-family:'Liberation Sans', sans-serif;font-size:21.5px;font-weight:700;color:#1f2937;transform:scaleX(0.9652);">JSON</span>
<span class="t" style="left:1627.00px;top:23.00px;font-family:'Liberation Sans', sans-serif;font-size:21.5px;font-weight:700;color:#1f2937;transform:scaleX(0.9903);">Test up to</span>
<span class="t" style="left:1752.40px;top:22.00px;font-family:'Liberation Sans', sans-serif;font-size:21px;font-weight:700;color:#3730a3;transform:scaleX(0.9333);">c</span>
<span class="t" style="left:1862.00px;top:23.00px;font-family:'Liberation Sans', sans-serif;font-size:21.5px;font-weight:700;color:#fff;transform:scaleX(0.9907);">Test flow</span>
<span class="t" style="left:2035.00px;top:23.00px;font-family:'Liberation Sans', sans-serif;font-size:21.5px;font-weight:700;color:#fff;transform:scaleX(0.9923);">Save draft</span>
<span class="t" style="left:2155.78px;top:25.00px;font-family:'Liberation Mono', monospace;font-size:19px;font-weight:400;color:#1f2937;transform:scaleX(0.9230);">Ctrl</span>
<span class="t" style="left:2219.70px;top:25.00px;font-family:'Liberation Mono', monospace;font-size:19px;font-weight:400;color:#1f2937;transform:scaleX(0.8182);">S</span>
<span class="t" style="left:2321.01px;top:23.00px;font-family:'Liberation Sans', sans-serif;font-size:21.5px;font-weight:700;color:#fff;transform:scaleX(0.9898);">Deploy</span>
<span class="t" style="left:148.50px;top:110.00px;font-family:'Liberation Sans', sans-serif;font-size:22.5px;font-weight:700;color:#1f2937;transform:scaleX(0.9689);">Settings</span>
<span class="t" style="left:148.00px;top:184.00px;font-family:'Liberation Sans', sans-serif;font-size:22.5px;font-weight:700;color:#1f2937;transform:scaleX(0.9357);">All Static Inputs</span>
<span class="t" style="left:161.30px;top:263.00px;font-family:'Liberation Sans', sans-serif;font-size:20.5px;font-weight:400;color:#374151;transform:scaleX(1.0111);">dataflow</span>
<span class="t" style="left:540.02px;top:336.00px;font-family:'Liberation Mono', monospace;font-size:20px;font-weight:400;color:#1f2937;transform:scaleX(0.9823);">Input</span>
<span class="t" style="left:521.05px;top:481.00px;font-family:'Liberation Sans', sans-serif;font-size:20.5px;font-weight:400;color:#1f2937;transform:scaleX(0.9501);">Inline Deno</span>
<span class="t" style="left:766.00px;top:482.00px;font-family:'Liberation Sans', sans-serif;font-size:20px;font-weight:700;color:#3730a3;transform:scaleX(0.8333);">a</span>
<span class="t" style="left:434.30px;top:629.00px;font-family:'Liberation Sans', sans-serif;font-size:20.5px;font-weight:400;color:#1f2937;transform:scaleX(0.9561);">Ask channel for approval (slack)</span>
<span class="t" style="left:763.56px;top:629.00px;font-family:'Liberation Sans', sans-serif;font-size:20px;font-weight:700;color:#3730a3;transform:scaleX(1.0364);">b</span>
<span class="t" style="left:521.05px;top:776.00px;font-family:'Liberation Sans', sans-serif;font-size:20.5px;font-weight:400;color:#1f2937;transform:scaleX(0.9501);">Inline Deno</span>
<span class="t" style="left:766.40px;top:776.00px;font-family:'Liberation Sans', sans-serif;font-size:20px;font-weight:700;color:#3730a3;transform:scaleX(0.8727);">c</span>
<span class="t" style="left:532.99px;top:925.00px;font-family:'Liberation Mono', monospace;font-size:20px;font-weight:400;color:#1f2937;transform:scaleX(1.0057);">Result</span>
<span class="t" style="left:394.99px;top:1304.00px;font-family:'Liberation Sans', sans-serif;font-size:21px;font-weight:700;color:#1f2937;transform:scaleX(1.0104);">Error Handler</span>
<span class="t" style="left:1174.83px;top:98.00px;font-family:'Liberation Sans', sans-serif;font-size:26px;font-weight:400;color:#6b7280;transform:scaleX(0.9725);">Summary</span>
<span class="t" style="left:2281.60px;top:100.00px;font-family:'Liberation Sans', sans-serif;font-size:21.5px;font-weight:700;color:#1f2937;transform:scaleX(0.9874);">Save to workspace</span>
<span class="t" style="left:1462.00px;top:163.00px;font-family:'Liberation Sans', sans-serif;font-size:21px;font-weight:400;color:#475063;">(</span>
<span class="t" style="left:1469.26px;top:163.00px;font-family:'Liberation Sans', sans-serif;font-size:21px;font-weight:400;color:#86cc9a;transform:scaleX(1.0448);">Deno</span>
<span class="t" style="left:1522.00px;top:163.00px;font-family:'Liberation Sans', sans-serif;font-size:21px;font-weight:400;color:#475063;transform:scaleX(0.9500);">)</span>
<span class="t" style="left:1598.70px;top:164.00px;font-family:'Liberation Sans', sans-serif;font-size:21.5px;font-weight:400;color:#1f2937;transform:scaleX(0.9899);">AI Gen</span>
<span class="t" style="left:1072.93px;top:212.00px;font-family:'Liberation Mono', monospace;font-size:23.5px;font-weight:400;color:#999999;transform:scaleX(0.8667);">1</span>
<span class="t" style="left:1072.93px;top:243.00px;font-family:'Liberation Mono', monospace;font-size:23.5px;font-weight:400;color:#999999;transform:scaleX(0.8667);">2</span>
<span class="t" style="left:1072.93px;top:274.00px;font-family:'Liberation Mono', monospace;font-size:23.5px;font-weight:400;color:#999999;transform:scaleX(0.8667);">3</span>
<span class="t" style="left:1072.93px;top:306.00px;font-family:'Liberation Mono', monospace;font-size:23.5px;font-weight:400;color:#999999;transform:scaleX(0.8667);">4</span>
<span class="t" style="left:1072.93px;top:337.00px;font-family:'Liberation Mono', monospace;font-size:23.5px;font-weight:400;color:#999999;transform:scaleX(0.8667);">5</span>
<span class="t" style="left:1072.93px;top:368.00px;font-family:'Liberation Mono', monospace;font-size:23.5px;font-weight:400;color:#0b216f;transform:scaleX(0.8667);">6</span>
<span class="t" style="left:1089.30px;top:798.00px;font-family:'Liberation Sans', sans-serif;font-size:25px;font-weight:700;color:#1f2937;transform:scaleX(0.9839);">Step Input</span>
<span class="t" style="left:1268.00px;top:798.00px;font-family:'Liberation Sans', sans-serif;font-size:25px;font-weight:700;color:#1f2937;">Test this step</span>
<span class="t" style="left:1484.40px;top:798.00px;font-family:'Liberation Sans', sans-serif;font-size:25px;font-weight:400;color:#2d3340;transform:scaleX(1.0518);">Advanced</span>
<span class="t" style="left:1074.14px;top:898.00px;font-family:'Liberation Sans', sans-serif;font-size:27px;font-weight:700;color:#1f2937;transform:scaleX(1.0560);">candidate_age</span>
<span class="t" style="left:1273.50px;top:899.00px;font-family:'Liberation Sans', sans-serif;font-size:26.7px;font-weight:400;color:#ef4444;transform:scaleX(1.0500);">*</span>
<span class="t" style="left:1300.70px;top:900.00px;font-family:'Liberation Sans', sans-serif;font-size:20px;font-weight:400;color:#4b5563;font-style:italic;transform:scaleX(1.1541);">string</span>
<span class="t" style="left:1707.70px;top:898.00px;font-family:'Liberation Sans', sans-serif;font-size:23px;font-weight:700;color:#1f2937;transform:scaleX(0.8692);">$</span>
<span class="t" style="left:1719.00px;top:899.00px;font-family:'Liberation Sans', sans-serif;font-size:22px;font-weight:700;color:#1f2937;transform:scaleX(1.0591);">{}</span>
<span class="t" style="left:1092.41px;top:969.00px;font-family:'Liberation Mono', monospace;font-size:23.8px;font-weight:400;color:#0b216f;transform:scaleX(0.8923);">1</span>
<span class="t" style="left:1808.54px;top:1002.00px;font-family:'Liberation Sans', sans-serif;font-size:22px;font-weight:400;color:#2d3340;transform:scaleX(1.1611);text-decoration:underline;text-underline-offset:3px">Help</span>
<span class="t" style="left:1998.53px;top:864.00px;font-family:'Liberation Sans', sans-serif;font-size:24.5px;font-weight:400;color:#1e40af;transform:scaleX(1.0864);">Edit or connect an input</span>
<span class="t" style="left:1968.13px;top:924.00px;font-family:'Liberation Sans', sans-serif;font-size:24px;font-weight:400;color:#6b7280;transform:scaleX(1.0724);">Search prop...</span>
<span class="t" style="left:1952.29px;top:997.00px;font-family:'Liberation Sans', sans-serif;font-size:24.5px;font-weight:700;color:#1f2937;transform:scaleX(1.0115);">Flow Input</span>
<span class="t" style="left:1966.57px;top:1039.00px;font-family:'Liberation Sans', sans-serif;font-size:20.5px;font-weight:400;color:#4b5563;transform:scaleX(1.0329);">No items ([])</span>
<span class="t" style="left:1952.30px;top:1092.00px;font-family:'Liberation Sans', sans-serif;font-size:24.5px;font-weight:700;color:#1f2937;transform:scaleX(1.0037);">Previous Result</span>
<span class="t" style="left:1984.86px;top:1132.00px;font-family:'Liberation Sans', sans-serif;font-size:22px;font-weight:700;color:#3730a3;transform:scaleX(1.0417);">b</span>
<span class="t" style="left:2024.50px;top:1132.00px;font-family:'Liberation Sans', sans-serif;font-size:22px;font-weight:700;color:#1f2937;">:</span>
<span class="t" style="left:2051.96px;top:1133.00px;font-family:'Liberation Sans', sans-serif;font-size:20.5px;font-weight:400;color:#4b5563;transform:scaleX(1.0438);">No items ([])</span>
<span class="t" style="left:1951.98px;top:1187.00px;font-family:'Liberation Sans', sans-serif;font-size:24.5px;font-weight:700;color:#1f2937;transform:scaleX(1.0159);">Resume payloads</span>
<span class="t" style="left:1984.93px;top:1226.00px;font-family:'Liberation Sans', sans-serif;font-size:22px;font-weight:700;color:#3730a3;transform:scaleX(0.9749);">resume</span>
<span class="t" style="left:2087.50px;top:1226.00px;font-family:'Liberation Sans', sans-serif;font-size:22px;font-weight:700;color:#1f2937;">:</span>
<span class="t" style="left:2107.59px;top:1227.00px;font-family:'Liberation Sans', sans-serif;font-size:21.5px;font-weight:700;color:#16a34a;transform:scaleX(0.9147);">"The resume payload"</span>
<span class="t" style="left:1984.93px;top:1264.00px;font-family:'Liberation Sans', sans-serif;font-size:22px;font-weight:700;color:#3730a3;transform:scaleX(0.9701);">resumes</span>
<span class="t" style="left:2099.00px;top:1264.00px;font-family:'Liberation Sans', sans-serif;font-size:22px;font-weight:700;color:#1f2937;">:</span>
<span class="t" style="left:1972.90px;top:1304.00px;font-family:'Liberation Sans', sans-serif;font-size:21.5px;font-weight:700;color:#16a34a;transform:scaleX(0.9034);">"All resume payloads from all approvers"</span>
<span class="t" style="left:1985.90px;top:1339.00px;font-family:'Liberation Sans', sans-serif;font-size:22px;font-weight:700;color:#3730a3;transform:scaleX(0.9553);">approvers</span>
<span class="t" style="left:2114.00px;top:1339.00px;font-family:'Liberation Sans', sans-serif;font-size:22px;font-weight:700;color:#1f2937;">:</span>
<span class="t" style="left:2134.09px;top:1340.00px;font-family:'Liberation Sans', sans-serif;font-size:21.5px;font-weight:700;color:#16a34a;transform:scaleX(0.9122);">"The list of approvers"</span>
</body></html>
